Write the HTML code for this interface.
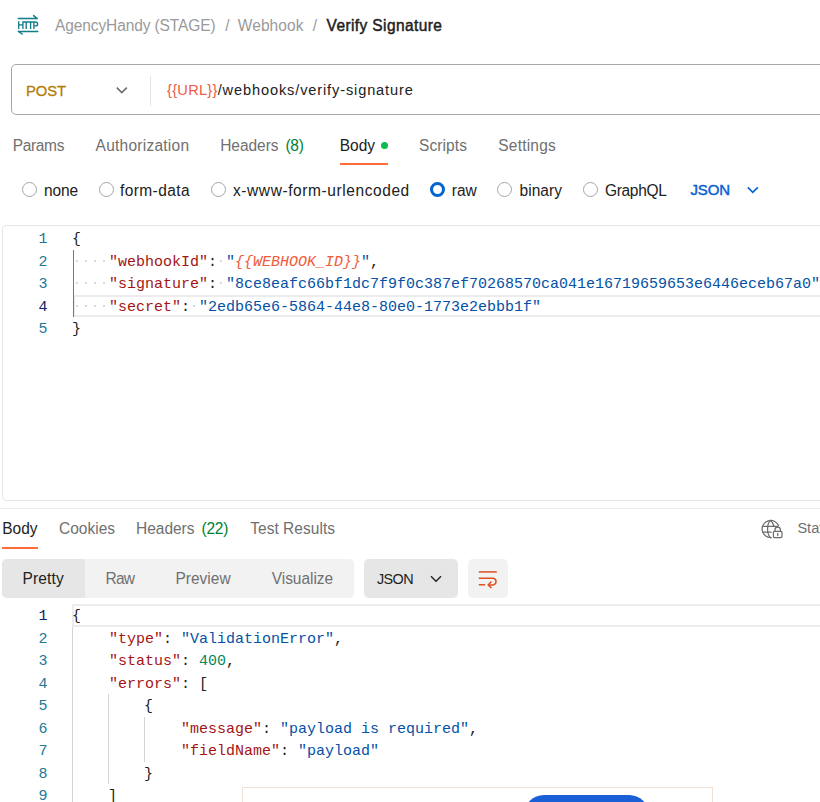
<!DOCTYPE html>
<html><head><meta charset="utf-8"><style>
html,body{margin:0;padding:0;background:#fff;}
body{width:820px;height:802px;position:relative;overflow:hidden;font-family:"Liberation Sans", sans-serif;}
.t{position:absolute;white-space:pre;}
.b{position:absolute;}
</style></head><body>
<svg class="b" style="left:0;top:0" width="60" height="50" viewBox="0 0 60 50">
<g stroke="#127c89" fill="none" stroke-linejoin="round">
<path stroke-width="1.5" stroke-linecap="round" d="M18.4 18.5H37.2M33.6 15.6L37.2 18.5M18.4 31.4H37.8M18.4 31.4L22.2 34"/>
<path stroke-width="1.35" d="M18.7 21.3V28.9M22.9 21.3V28.9M18.7 24.9H22.9M23.6 22H33.2M26.2 22V28.9M30.6 22V28.9M33.9 28.9V22H35.6C38.3 22 38.3 25.8 35.6 25.8H33.9"/>
</g></svg>
<div class="t" style='left:55.00px;top:16.35px;font-size:15.5px;line-height:20.15px;color:#9a9a9a;font-weight:400;font-family:"Liberation Sans", sans-serif;letter-spacing:-0.109px;transform:scaleY(1.02);transform-origin:0 15.45px;'>AgencyHandy (STAGE)</div>
<div class="t" style='left:225.20px;top:16.35px;font-size:15.5px;line-height:20.15px;color:#9a9a9a;font-weight:400;font-family:"Liberation Sans", sans-serif;transform:scaleY(1.02);transform-origin:0 15.45px;'>/</div>
<div class="t" style='left:237.80px;top:16.35px;font-size:15.5px;line-height:20.15px;color:#9a9a9a;font-weight:400;font-family:"Liberation Sans", sans-serif;letter-spacing:0.069px;transform:scaleY(1.02);transform-origin:0 15.45px;'>Webhook</div>
<div class="t" style='left:312.80px;top:16.35px;font-size:15.5px;line-height:20.15px;color:#9a9a9a;font-weight:400;font-family:"Liberation Sans", sans-serif;transform:scaleY(1.02);transform-origin:0 15.45px;'>/</div>
<div class="t" style='left:326.50px;top:15.95px;font-size:15.5px;line-height:20.15px;color:#212121;font-weight:400;font-family:"Liberation Sans", sans-serif;letter-spacing:0.397px;transform:scaleY(1.02);transform-origin:0 15.45px;-webkit-text-stroke:0.45px #212121;'>Verify Signature</div>
<div class="b" style="left:11px;top:64px;width:900px;height:51px;border:1px solid #a8a8a8;border-radius:5px;box-sizing:border-box;"></div>
<div class="t" style='left:26.00px;top:82.05px;font-size:14.8px;line-height:19.24px;color:#b27d05;font-weight:400;font-family:"Liberation Sans", sans-serif;letter-spacing:-0.099px;transform:scaleY(1.02);transform-origin:0 14.75px;-webkit-text-stroke:0.3px #b27d05;'>POST</div>
<svg class="b" style="left:110px;top:82px" width="22" height="16" viewBox="0 0 22 16"><path d="M6.8 5.6L11.8 10.6L16.8 5.6" stroke="#6b6b6b" stroke-width="1.5" fill="none"/></svg>
<div class="b" style="left:150px;top:75.5px;width:1px;height:30px;background:#e6e6e6;"></div>
<div class="t" style='left:167.00px;top:81.15px;font-size:14.6px;line-height:18.98px;color:#ef5b48;font-weight:400;font-family:"Liberation Sans", sans-serif;letter-spacing:0.285px;transform:scaleY(1.02);transform-origin:0 14.55px;'>{{URL}}</div>
<div class="t" style='left:217.70px;top:81.15px;font-size:14.6px;line-height:18.98px;color:#212121;font-weight:400;font-family:"Liberation Sans", sans-serif;letter-spacing:0.862px;transform:scaleY(1.02);transform-origin:0 14.55px;'>/webhooks/verify-signature</div>
<div class="t" style='left:12.70px;top:135.65px;font-size:15.5px;line-height:20.15px;color:#707070;font-weight:400;font-family:"Liberation Sans", sans-serif;letter-spacing:-0.334px;transform:scaleY(1.02);transform-origin:0 15.45px;'>Params</div>
<div class="t" style='left:95.60px;top:135.65px;font-size:15.5px;line-height:20.15px;color:#707070;font-weight:400;font-family:"Liberation Sans", sans-serif;letter-spacing:0.246px;transform:scaleY(1.02);transform-origin:0 15.45px;'>Authorization</div>
<div class="t" style='left:220.20px;top:135.65px;font-size:15.5px;line-height:20.15px;color:#707070;font-weight:400;font-family:"Liberation Sans", sans-serif;letter-spacing:-0.042px;transform:scaleY(1.02);transform-origin:0 15.45px;'>Headers</div>
<div class="t" style='left:285.40px;top:135.65px;font-size:15.5px;line-height:20.15px;color:#007f31;font-weight:400;font-family:"Liberation Sans", sans-serif;letter-spacing:-0.212px;transform:scaleY(1.02);transform-origin:0 15.45px;'>(8)</div>
<div class="t" style='left:339.80px;top:135.65px;font-size:15.5px;line-height:20.15px;color:#212121;font-weight:400;font-family:"Liberation Sans", sans-serif;letter-spacing:-0.011px;transform:scaleY(1.02);transform-origin:0 15.45px;'>Body</div>
<div class="b" style="left:381.2px;top:141.8px;width:7px;height:7px;background:#1db954;border-radius:50%;background:#0cbb52;"></div>
<div class="b" style="left:339.8px;top:163.4px;width:48px;height:1.6px;background:#ff6c37;"></div>
<div class="t" style='left:419.00px;top:135.65px;font-size:15.5px;line-height:20.15px;color:#707070;font-weight:400;font-family:"Liberation Sans", sans-serif;letter-spacing:0.089px;transform:scaleY(1.02);transform-origin:0 15.45px;'>Scripts</div>
<div class="t" style='left:498.30px;top:135.65px;font-size:15.5px;line-height:20.15px;color:#707070;font-weight:400;font-family:"Liberation Sans", sans-serif;letter-spacing:0.209px;transform:scaleY(1.02);transform-origin:0 15.45px;'>Settings</div>
<div class="b" style="left:22.0px;top:182.1px;width:15px;height:15px;border:1px solid #a6a6a6;border-radius:50%;box-sizing:border-box;"></div>
<div class="t" style='left:43.90px;top:181.05px;font-size:15.5px;line-height:20.15px;color:#212121;font-weight:400;font-family:"Liberation Sans", sans-serif;letter-spacing:-0.100px;transform:scaleY(1.02);transform-origin:0 15.45px;'>none</div>
<div class="b" style="left:98.9px;top:182.1px;width:15px;height:15px;border:1px solid #a6a6a6;border-radius:50%;box-sizing:border-box;"></div>
<div class="t" style='left:120.00px;top:181.05px;font-size:15.5px;line-height:20.15px;color:#212121;font-weight:400;font-family:"Liberation Sans", sans-serif;letter-spacing:0.406px;transform:scaleY(1.02);transform-origin:0 15.45px;'>form-data</div>
<div class="b" style="left:210.8px;top:182.1px;width:15px;height:15px;border:1px solid #a6a6a6;border-radius:50%;box-sizing:border-box;"></div>
<div class="t" style='left:233.00px;top:181.05px;font-size:15.5px;line-height:20.15px;color:#212121;font-weight:400;font-family:"Liberation Sans", sans-serif;letter-spacing:0.586px;transform:scaleY(1.02);transform-origin:0 15.45px;'>x-www-form-urlencoded</div>
<div class="b" style="left:429.9px;top:182.1px;width:15px;height:15px;border:3.5px solid #0265d2;border-radius:50%;box-sizing:border-box;"></div>
<div class="t" style='left:451.70px;top:181.05px;font-size:15.5px;line-height:20.15px;color:#212121;font-weight:400;font-family:"Liberation Sans", sans-serif;letter-spacing:0.044px;transform:scaleY(1.02);transform-origin:0 15.45px;'>raw</div>
<div class="b" style="left:497.0px;top:182.1px;width:15px;height:15px;border:1px solid #a6a6a6;border-radius:50%;box-sizing:border-box;"></div>
<div class="t" style='left:519.50px;top:181.05px;font-size:15.5px;line-height:20.15px;color:#212121;font-weight:400;font-family:"Liberation Sans", sans-serif;letter-spacing:0.047px;transform:scaleY(1.02);transform-origin:0 15.45px;'>binary</div>
<div class="b" style="left:582.8px;top:182.1px;width:15px;height:15px;border:1px solid #a6a6a6;border-radius:50%;box-sizing:border-box;"></div>
<div class="t" style='left:605.00px;top:181.05px;font-size:15.5px;line-height:20.15px;color:#212121;font-weight:400;font-family:"Liberation Sans", sans-serif;letter-spacing:-0.326px;transform:scaleY(1.02);transform-origin:0 15.45px;'>GraphQL</div>
<div class="t" style='left:690.40px;top:180.45px;font-size:15px;line-height:19.5px;color:#0a5fd0;font-weight:400;font-family:"Liberation Sans", sans-serif;letter-spacing:-0.100px;transform:scaleY(1.02);transform-origin:0 14.95px;-webkit-text-stroke:0.45px #0a5fd0;'>JSON</div>
<svg class="b" style="left:742px;top:182px" width="22" height="16" viewBox="0 0 22 16"><path d="M5.8 5.4L10.8 10.4L15.8 5.4" stroke="#0265d2" stroke-width="1.6" fill="none"/></svg>
<div class="b" style="left:2px;top:225px;width:900px;height:276px;border:1px solid #e6e6e6;border-radius:4px;box-sizing:border-box;"></div>
<div class="b" style="left:72.5px;top:295px;width:900px;height:22px;border:2px solid #ececec;border-right:0;box-sizing:border-box;"></div>
<div class="b" style="left:72.8px;top:249.8px;width:1.6px;height:67.19999999999999px;background:#777;"></div>
<div class="t" style='left:38.60px;top:230.06px;font-size:15px;line-height:19.5px;color:#237893;font-weight:400;font-family:"Liberation Mono", monospace;'>1</div>
<div class="t" style='left:72.00px;top:230.06px;font-size:15px;line-height:19.5px;color:#212121;font-weight:400;font-family:"Liberation Mono", monospace;white-space:pre;'>{</div>
<div class="t" style='left:38.60px;top:252.56px;font-size:15px;line-height:19.5px;color:#237893;font-weight:400;font-family:"Liberation Mono", monospace;'>2</div>
<div class="t" style='left:73.00px;top:252.56px;font-size:15px;line-height:19.5px;color:#212121;font-weight:400;font-family:"Liberation Mono", monospace;white-space:pre;'>    </div>
<div class="t" style='left:109.01px;top:252.56px;font-size:15px;line-height:19.5px;color:#a31515;font-weight:400;font-family:"Liberation Mono", monospace;white-space:pre;'>"webhookId"</div>
<div class="t" style='left:208.02px;top:252.56px;font-size:15px;line-height:19.5px;color:#212121;font-weight:400;font-family:"Liberation Mono", monospace;white-space:pre;'>: </div>
<div class="t" style='left:226.02px;top:252.56px;font-size:15px;line-height:19.5px;color:#0451a5;font-weight:400;font-family:"Liberation Mono", monospace;white-space:pre;'>"</div>
<div class="t" style='left:235.02px;top:252.56px;font-size:15px;line-height:19.5px;color:#f05a3a;font-weight:400;font-family:"Liberation Mono", monospace;font-style:italic;white-space:pre;'>{{WEBHOOK_ID}}</div>
<div class="t" style='left:361.04px;top:252.56px;font-size:15px;line-height:19.5px;color:#0451a5;font-weight:400;font-family:"Liberation Mono", monospace;white-space:pre;'>"</div>
<div class="t" style='left:370.04px;top:252.56px;font-size:15px;line-height:19.5px;color:#212121;font-weight:400;font-family:"Liberation Mono", monospace;white-space:pre;'>,</div>
<div class="b" style="left:76px;top:260px;width:2px;height:2px;background:#cdcdcd;border-radius:1px;"></div>
<div class="b" style="left:85px;top:260px;width:2px;height:2px;background:#cdcdcd;border-radius:1px;"></div>
<div class="b" style="left:94px;top:260px;width:2px;height:2px;background:#cdcdcd;border-radius:1px;"></div>
<div class="b" style="left:103px;top:260px;width:2px;height:2px;background:#cdcdcd;border-radius:1px;"></div>
<div class="b" style="left:220px;top:260px;width:2px;height:2px;background:#cdcdcd;border-radius:1px;"></div>
<div class="t" style='left:38.60px;top:275.06px;font-size:15px;line-height:19.5px;color:#237893;font-weight:400;font-family:"Liberation Mono", monospace;'>3</div>
<div class="t" style='left:73.00px;top:275.06px;font-size:15px;line-height:19.5px;color:#212121;font-weight:400;font-family:"Liberation Mono", monospace;white-space:pre;'>    </div>
<div class="t" style='left:109.01px;top:275.06px;font-size:15px;line-height:19.5px;color:#a31515;font-weight:400;font-family:"Liberation Mono", monospace;white-space:pre;'>"signature"</div>
<div class="t" style='left:208.02px;top:275.06px;font-size:15px;line-height:19.5px;color:#212121;font-weight:400;font-family:"Liberation Mono", monospace;white-space:pre;'>: </div>
<div class="t" style='left:226.02px;top:275.06px;font-size:15px;line-height:19.5px;color:#0451a5;font-weight:400;font-family:"Liberation Mono", monospace;white-space:pre;'>"8ce8eafc66bf1dc7f9f0c387ef70268570ca041e16719659653e6446eceb67a0"</div>
<div class="b" style="left:76px;top:282px;width:2px;height:2px;background:#cdcdcd;border-radius:1px;"></div>
<div class="b" style="left:85px;top:282px;width:2px;height:2px;background:#cdcdcd;border-radius:1px;"></div>
<div class="b" style="left:94px;top:282px;width:2px;height:2px;background:#cdcdcd;border-radius:1px;"></div>
<div class="b" style="left:103px;top:282px;width:2px;height:2px;background:#cdcdcd;border-radius:1px;"></div>
<div class="b" style="left:220px;top:282px;width:2px;height:2px;background:#cdcdcd;border-radius:1px;"></div>
<div class="t" style='left:38.60px;top:297.56px;font-size:15px;line-height:19.5px;color:#0b216f;font-weight:400;font-family:"Liberation Mono", monospace;'>4</div>
<div class="t" style='left:73.00px;top:297.56px;font-size:15px;line-height:19.5px;color:#212121;font-weight:400;font-family:"Liberation Mono", monospace;white-space:pre;'>    </div>
<div class="t" style='left:109.01px;top:297.56px;font-size:15px;line-height:19.5px;color:#a31515;font-weight:400;font-family:"Liberation Mono", monospace;white-space:pre;'>"secret"</div>
<div class="t" style='left:181.02px;top:297.56px;font-size:15px;line-height:19.5px;color:#212121;font-weight:400;font-family:"Liberation Mono", monospace;white-space:pre;'>: </div>
<div class="t" style='left:199.02px;top:297.56px;font-size:15px;line-height:19.5px;color:#0451a5;font-weight:400;font-family:"Liberation Mono", monospace;white-space:pre;'>"2edb65e6-5864-44e8-80e0-1773e2ebbb1f"</div>
<div class="b" style="left:76px;top:305px;width:2px;height:2px;background:#cdcdcd;border-radius:1px;"></div>
<div class="b" style="left:85px;top:305px;width:2px;height:2px;background:#cdcdcd;border-radius:1px;"></div>
<div class="b" style="left:94px;top:305px;width:2px;height:2px;background:#cdcdcd;border-radius:1px;"></div>
<div class="b" style="left:103px;top:305px;width:2px;height:2px;background:#cdcdcd;border-radius:1px;"></div>
<div class="b" style="left:193px;top:305px;width:2px;height:2px;background:#cdcdcd;border-radius:1px;"></div>
<div class="t" style='left:38.60px;top:320.06px;font-size:15px;line-height:19.5px;color:#237893;font-weight:400;font-family:"Liberation Mono", monospace;'>5</div>
<div class="t" style='left:72.00px;top:320.06px;font-size:15px;line-height:19.5px;color:#212121;font-weight:400;font-family:"Liberation Mono", monospace;white-space:pre;'>}</div>
<div class="b" style="left:0px;top:508px;width:820px;height:1px;background:#ebebeb;"></div>
<div class="t" style='left:2.30px;top:519.15px;font-size:15.5px;line-height:20.15px;color:#212121;font-weight:400;font-family:"Liberation Sans", sans-serif;letter-spacing:-0.036px;transform:scaleY(1.02);transform-origin:0 15.45px;'>Body</div>
<div class="b" style="left:2px;top:547.2px;width:36px;height:1.6px;background:#ff6c37;"></div>
<div class="t" style='left:59.00px;top:519.15px;font-size:15.5px;line-height:20.15px;color:#707070;font-weight:400;font-family:"Liberation Sans", sans-serif;transform:scaleY(1.02);transform-origin:0 15.45px;'>Cookies</div>
<div class="t" style='left:136.10px;top:519.15px;font-size:15.5px;line-height:20.15px;color:#707070;font-weight:400;font-family:"Liberation Sans", sans-serif;letter-spacing:-0.042px;transform:scaleY(1.02);transform-origin:0 15.45px;'>Headers</div>
<div class="t" style='left:201.40px;top:519.15px;font-size:15.5px;line-height:20.15px;color:#007f31;font-weight:400;font-family:"Liberation Sans", sans-serif;letter-spacing:-0.166px;transform:scaleY(1.02);transform-origin:0 15.45px;'>(22)</div>
<div class="t" style='left:250.20px;top:519.15px;font-size:15.5px;line-height:20.15px;color:#707070;font-weight:400;font-family:"Liberation Sans", sans-serif;letter-spacing:0.039px;transform:scaleY(1.02);transform-origin:0 15.45px;'>Test Results</div>
<svg class="b" style="left:760px;top:518px" width="26" height="22" viewBox="0 0 26 22">
<g stroke="#6b6b6b" stroke-width="1.25" fill="none" stroke-linecap="round">
<path d="M18.6 7.6A8.6 8.6 0 1 0 11.2 19.6"/>
<path d="M10.5 2.4C6.6 6 6.6 16 10.5 19.6M10.5 2.4C12.5 4.2 13.6 6.2 14 8.3"/>
<path d="M3 8.3H17.8M3 14.2H11.2"/>
<rect x="13.4" y="13.3" width="8.6" height="6.3" rx="1.3"/>
<path d="M15 13.3V11.7A2.7 2.7 0 0 1 20.4 11.7V13.3M17.7 15.3V17.4"/>
</g></svg>
<div class="t" style='left:797.40px;top:519.15px;font-size:14.6px;line-height:18.98px;color:#707070;font-weight:400;font-family:"Liberation Sans", sans-serif;transform:scaleY(1.02);transform-origin:0 14.55px;'>Status</div>
<div class="b" style="left:2.2px;top:559.2px;width:351.7px;height:39.1px;background:#f2f2f2;border-radius:5px;"></div>
<div class="b" style="left:2.2px;top:559.2px;width:82.8px;height:39.1px;background:#e6e6e6;border-radius:5px 0 0 5px;"></div>
<div class="t" style='left:22.40px;top:569.35px;font-size:15.5px;line-height:20.15px;color:#212121;font-weight:400;font-family:"Liberation Sans", sans-serif;letter-spacing:0.183px;transform:scaleY(1.02);transform-origin:0 15.45px;'>Pretty</div>
<div class="t" style='left:105.40px;top:569.35px;font-size:15.5px;line-height:20.15px;color:#707070;font-weight:400;font-family:"Liberation Sans", sans-serif;letter-spacing:-0.700px;transform:scaleY(1.02);transform-origin:0 15.45px;'>Raw</div>
<div class="t" style='left:175.40px;top:569.35px;font-size:15.5px;line-height:20.15px;color:#707070;font-weight:400;font-family:"Liberation Sans", sans-serif;letter-spacing:0.025px;transform:scaleY(1.02);transform-origin:0 15.45px;'>Preview</div>
<div class="t" style='left:271.70px;top:569.35px;font-size:15.5px;line-height:20.15px;color:#707070;font-weight:400;font-family:"Liberation Sans", sans-serif;letter-spacing:-0.028px;transform:scaleY(1.02);transform-origin:0 15.45px;'>Visualize</div>
<div class="b" style="left:364.2px;top:559.2px;width:93.6px;height:39.2px;background:#e6e6e6;border-radius:5px;"></div>
<div class="t" style='left:376.90px;top:569.85px;font-size:14.4px;line-height:18.72px;color:#212121;font-weight:400;font-family:"Liberation Sans", sans-serif;letter-spacing:-0.569px;transform:scaleY(1.02);transform-origin:0 14.35px;'>JSON</div>
<svg class="b" style="left:426px;top:570px" width="20" height="18" viewBox="0 0 20 18"><path d="M5 6.3L10 11.3L15 6.3" stroke="#212121" stroke-width="1.35" fill="none"/></svg>
<div class="b" style="left:468.2px;top:559.2px;width:39.6px;height:39.2px;background:#f2f2f2;border-radius:5px;"></div>
<svg class="b" style="left:468px;top:559px" width="40" height="40" viewBox="0 0 40 40">
<g stroke="#e0501e" stroke-width="1.5" fill="none">
<path d="M10.8 12.9H28.8"/>
<path d="M10.8 19.2H25.2A3.4 3.4 0 0 1 25.2 25.9H20.4"/>
<path d="M10.8 25.8H17.2M23.4 22.6L20.2 25.9L23.4 29"/>
</g></svg>
<div class="b" style="left:72.1px;top:604.1px;width:900px;height:22.6px;border:2px solid #ececec;border-right:0;box-sizing:border-box;"></div>
<div class="b" style="left:72.4px;top:626.8px;width:1px;height:202.5px;background:#d4d4d4;"></div>
<div class="b" style="left:108.2px;top:694.3px;width:1px;height:90.0px;background:#d4d4d4;"></div>
<div class="b" style="left:144.0px;top:716.8px;width:1px;height:45.0px;background:#d4d4d4;"></div>
<div class="t" style='left:38.60px;top:607.06px;font-size:15px;line-height:19.5px;color:#0b216f;font-weight:400;font-family:"Liberation Mono", monospace;'>1</div>
<div class="t" style='left:72.00px;top:607.06px;font-size:15px;line-height:19.5px;color:#212121;font-weight:400;font-family:"Liberation Mono", monospace;white-space:pre;'>{</div>
<div class="t" style='left:38.60px;top:629.56px;font-size:15px;line-height:19.5px;color:#237893;font-weight:400;font-family:"Liberation Mono", monospace;'>2</div>
<div class="t" style='left:73.00px;top:629.56px;font-size:15px;line-height:19.5px;color:#212121;font-weight:400;font-family:"Liberation Mono", monospace;white-space:pre;'>    </div>
<div class="t" style='left:109.01px;top:629.56px;font-size:15px;line-height:19.5px;color:#a31515;font-weight:400;font-family:"Liberation Mono", monospace;white-space:pre;'>"type"</div>
<div class="t" style='left:163.01px;top:629.56px;font-size:15px;line-height:19.5px;color:#212121;font-weight:400;font-family:"Liberation Mono", monospace;white-space:pre;'>: </div>
<div class="t" style='left:181.02px;top:629.56px;font-size:15px;line-height:19.5px;color:#0451a5;font-weight:400;font-family:"Liberation Mono", monospace;white-space:pre;'>"ValidationError"</div>
<div class="t" style='left:334.04px;top:629.56px;font-size:15px;line-height:19.5px;color:#212121;font-weight:400;font-family:"Liberation Mono", monospace;white-space:pre;'>,</div>
<div class="t" style='left:38.60px;top:652.06px;font-size:15px;line-height:19.5px;color:#237893;font-weight:400;font-family:"Liberation Mono", monospace;'>3</div>
<div class="t" style='left:73.00px;top:652.06px;font-size:15px;line-height:19.5px;color:#212121;font-weight:400;font-family:"Liberation Mono", monospace;white-space:pre;'>    </div>
<div class="t" style='left:109.01px;top:652.06px;font-size:15px;line-height:19.5px;color:#a31515;font-weight:400;font-family:"Liberation Mono", monospace;white-space:pre;'>"status"</div>
<div class="t" style='left:181.02px;top:652.06px;font-size:15px;line-height:19.5px;color:#212121;font-weight:400;font-family:"Liberation Mono", monospace;white-space:pre;'>: </div>
<div class="t" style='left:199.02px;top:652.06px;font-size:15px;line-height:19.5px;color:#098658;font-weight:400;font-family:"Liberation Mono", monospace;white-space:pre;'>400</div>
<div class="t" style='left:226.02px;top:652.06px;font-size:15px;line-height:19.5px;color:#212121;font-weight:400;font-family:"Liberation Mono", monospace;white-space:pre;'>,</div>
<div class="t" style='left:38.60px;top:674.56px;font-size:15px;line-height:19.5px;color:#237893;font-weight:400;font-family:"Liberation Mono", monospace;'>4</div>
<div class="t" style='left:73.00px;top:674.56px;font-size:15px;line-height:19.5px;color:#212121;font-weight:400;font-family:"Liberation Mono", monospace;white-space:pre;'>    </div>
<div class="t" style='left:109.01px;top:674.56px;font-size:15px;line-height:19.5px;color:#a31515;font-weight:400;font-family:"Liberation Mono", monospace;white-space:pre;'>"errors"</div>
<div class="t" style='left:181.02px;top:674.56px;font-size:15px;line-height:19.5px;color:#212121;font-weight:400;font-family:"Liberation Mono", monospace;white-space:pre;'>: [</div>
<div class="t" style='left:38.60px;top:697.06px;font-size:15px;line-height:19.5px;color:#237893;font-weight:400;font-family:"Liberation Mono", monospace;'>5</div>
<div class="t" style='left:73.00px;top:697.06px;font-size:15px;line-height:19.5px;color:#212121;font-weight:400;font-family:"Liberation Mono", monospace;white-space:pre;'>        </div>
<div class="t" style='left:144.01px;top:697.06px;font-size:15px;line-height:19.5px;color:#212121;font-weight:400;font-family:"Liberation Mono", monospace;white-space:pre;'>{</div>
<div class="t" style='left:38.60px;top:719.56px;font-size:15px;line-height:19.5px;color:#237893;font-weight:400;font-family:"Liberation Mono", monospace;'>6</div>
<div class="t" style='left:73.00px;top:719.56px;font-size:15px;line-height:19.5px;color:#212121;font-weight:400;font-family:"Liberation Mono", monospace;white-space:pre;'>            </div>
<div class="t" style='left:181.02px;top:719.56px;font-size:15px;line-height:19.5px;color:#a31515;font-weight:400;font-family:"Liberation Mono", monospace;white-space:pre;'>"message"</div>
<div class="t" style='left:262.03px;top:719.56px;font-size:15px;line-height:19.5px;color:#212121;font-weight:400;font-family:"Liberation Mono", monospace;white-space:pre;'>: </div>
<div class="t" style='left:280.03px;top:719.56px;font-size:15px;line-height:19.5px;color:#0451a5;font-weight:400;font-family:"Liberation Mono", monospace;white-space:pre;'>"payload is required"</div>
<div class="t" style='left:469.06px;top:719.56px;font-size:15px;line-height:19.5px;color:#212121;font-weight:400;font-family:"Liberation Mono", monospace;white-space:pre;'>,</div>
<div class="t" style='left:38.60px;top:742.06px;font-size:15px;line-height:19.5px;color:#237893;font-weight:400;font-family:"Liberation Mono", monospace;'>7</div>
<div class="t" style='left:73.00px;top:742.06px;font-size:15px;line-height:19.5px;color:#212121;font-weight:400;font-family:"Liberation Mono", monospace;white-space:pre;'>            </div>
<div class="t" style='left:181.02px;top:742.06px;font-size:15px;line-height:19.5px;color:#a31515;font-weight:400;font-family:"Liberation Mono", monospace;white-space:pre;'>"fieldName"</div>
<div class="t" style='left:280.03px;top:742.06px;font-size:15px;line-height:19.5px;color:#212121;font-weight:400;font-family:"Liberation Mono", monospace;white-space:pre;'>: </div>
<div class="t" style='left:298.03px;top:742.06px;font-size:15px;line-height:19.5px;color:#0451a5;font-weight:400;font-family:"Liberation Mono", monospace;white-space:pre;'>"payload"</div>
<div class="t" style='left:38.60px;top:764.56px;font-size:15px;line-height:19.5px;color:#237893;font-weight:400;font-family:"Liberation Mono", monospace;'>8</div>
<div class="t" style='left:73.00px;top:764.56px;font-size:15px;line-height:19.5px;color:#212121;font-weight:400;font-family:"Liberation Mono", monospace;white-space:pre;'>        </div>
<div class="t" style='left:144.01px;top:764.56px;font-size:15px;line-height:19.5px;color:#212121;font-weight:400;font-family:"Liberation Mono", monospace;white-space:pre;'>}</div>
<div class="t" style='left:38.60px;top:787.06px;font-size:15px;line-height:19.5px;color:#237893;font-weight:400;font-family:"Liberation Mono", monospace;'>9</div>
<div class="t" style='left:73.00px;top:787.06px;font-size:15px;line-height:19.5px;color:#212121;font-weight:400;font-family:"Liberation Mono", monospace;white-space:pre;'>    </div>
<div class="t" style='left:108.01px;top:787.06px;font-size:15px;line-height:19.5px;color:#212121;font-weight:400;font-family:"Liberation Mono", monospace;white-space:pre;'>]</div>
<div class="b" style="left:242px;top:787.2px;width:470.6px;height:40px;background:#fff;border:1.3px solid #f1e1d3;box-sizing:border-box;"></div>
<div class="b" style="left:524.3px;top:794.7px;width:124.8px;height:40px;background:#1a5fd6;border-radius:20px;"></div>
</body></html>
